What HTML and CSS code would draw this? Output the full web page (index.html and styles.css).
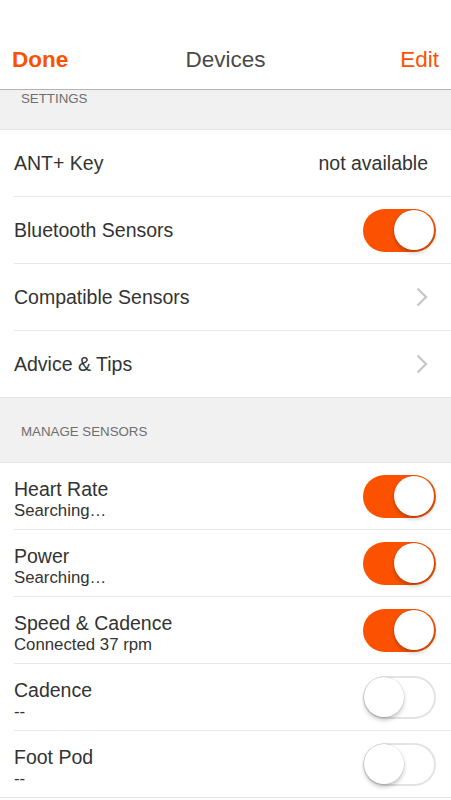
FILE: index.html
```html
<!DOCTYPE html>
<html>
<head>
<meta charset="utf-8">
<link rel="stylesheet" href="styles.css">
</head>
<body>
<div class="screen">
  <header class="nav">
    <div class="nav-bar">
      <span class="nav-btn nav-done">Done</span>
      <span class="nav-title">Devices</span>
      <span class="nav-btn nav-edit">Edit</span>
    </div>
  </header>

  <div class="section-header section-header-short">SETTINGS</div>
  <div class="group">
    <div class="row"><div class="row-inner">
      <span class="row-title">ANT+ Key</span>
      <span class="row-value">not available</span>
    </div></div>
    <div class="row"><div class="row-inner switch-row">
      <span class="row-title">Bluetooth Sensors</span>
      <span class="switch on"><span class="knob"></span></span>
    </div></div>
    <div class="row"><div class="row-inner">
      <span class="row-title">Compatible Sensors</span>
      <svg class="chevron" width="12" height="20" viewBox="0 0 12 20"><polyline points="1.5,1.5 10,10 1.5,18.5" fill="none" stroke="#c8c8cc" stroke-width="2.4"/></svg>
    </div></div>
    <div class="row"><div class="row-inner">
      <span class="row-title">Advice &amp; Tips</span>
      <svg class="chevron" width="12" height="20" viewBox="0 0 12 20"><polyline points="1.5,1.5 10,10 1.5,18.5" fill="none" stroke="#c8c8cc" stroke-width="2.4"/></svg>
    </div></div>
  </div>

  <div class="section-header">MANAGE SENSORS</div>
  <div class="group">
    <div class="row"><div class="row-inner switch-row">
      <div class="two-line"><span class="row-title">Heart Rate</span><span class="row-sub">Searching…</span></div>
      <span class="switch on"><span class="knob"></span></span>
    </div></div>
    <div class="row"><div class="row-inner switch-row">
      <div class="two-line"><span class="row-title">Power</span><span class="row-sub">Searching…</span></div>
      <span class="switch on"><span class="knob"></span></span>
    </div></div>
    <div class="row"><div class="row-inner switch-row">
      <div class="two-line"><span class="row-title">Speed &amp; Cadence</span><span class="row-sub">Connected 37 rpm</span></div>
      <span class="switch on"><span class="knob"></span></span>
    </div></div>
    <div class="row"><div class="row-inner switch-row">
      <div class="two-line"><span class="row-title">Cadence</span><span class="row-sub">--</span></div>
      <span class="switch off"><span class="knob"></span></span>
    </div></div>
    <div class="row"><div class="row-inner switch-row">
      <div class="two-line"><span class="row-title">Foot Pod</span><span class="row-sub">--</span></div>
      <span class="switch off"><span class="knob"></span></span>
    </div></div>
  </div>
</div>
</body>
</html>
```

FILE: styles.css
```css
* { box-sizing: border-box; }
html, body { margin: 0; padding: 0; background: #ffffff; }
body {
  font-family: "Liberation Sans", Arial, sans-serif;
  color: #333333;
  width: 451px;
  height: 800px;
  overflow: hidden;
}
.screen { width: 451px; }

.nav {
  height: 90px;
  padding-top: 38px;
  background: #ffffff;
  border-bottom: 1px solid #b4b4b4;
}
.nav-bar {
  height: 44px;
  display: grid;
  grid-template-columns: 1fr auto 1fr;
  align-items: center;
  padding: 0 12px;
  font-size: 22.5px;
}
.nav-btn { color: #fc5200; }
.nav-done { font-weight: bold; justify-self: start; }
.nav-title { color: #4a4a4a; }
.nav-edit { justify-self: end; }

.section-header {
  height: 65px;
  background: #f1f1f1;
  border-bottom: 1px solid #e4e4e4;
  display: flex;
  align-items: flex-end;
  padding: 0 0 22px 21px;
  font-size: 13.3px;
  line-height: 16px;
  color: #6e6e6e;
}
.section-header-short { height: 40px; }

.group {
  background: #ffffff;
  border-bottom: 1px solid #e4e4e4;
}
.row { padding-left: 14px; }
.row-inner {
  height: 67px;
  border-bottom: 1px solid #e8e8e8;
  display: flex;
  align-items: center;
  justify-content: space-between;
  padding-right: 23px;
}
.group .row:last-child .row-inner { border-bottom: none; height: 66px; }
.switch-row { padding-right: 15px; }

.row-title { font-size: 19.5px; line-height: 20px; color: #333333; }
.row-value { font-size: 19.5px; color: #333333; }
.row-sub { font-size: 16.8px; line-height: 20px; margin-top: 2px; color: #333333; }
.two-line {
  display: flex;
  flex-direction: column;
  padding-top: 7px;
}
.chevron { display: block; }

.switch {
  width: 73px;
  height: 43px;
  border-radius: 22px;
  display: flex;
  align-items: center;
  padding: 0 2px;
}
.switch.on { background: #fc5200; justify-content: flex-end; }
.switch.off {
  background: #ffffff;
  box-shadow: inset 0 0 0 2px #e3e3e3;
  justify-content: flex-start;
  padding: 0 1px;
}
.knob {
  width: 40px;
  height: 40px;
  border-radius: 50%;
  background: #ffffff;
  box-shadow: 0 3px 4px rgba(0, 0, 0, 0.22), 0 0 0 0.5px rgba(0, 0, 0, 0.12);
}
```
